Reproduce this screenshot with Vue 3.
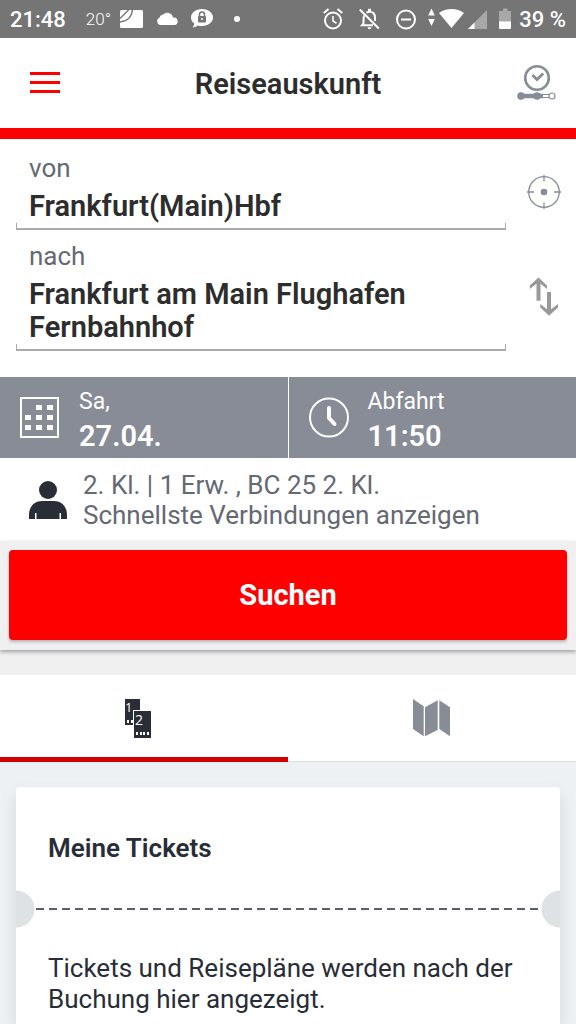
<script setup>
import { ref } from 'vue'

const from = ref('Frankfurt(Main)Hbf')
const to = ref('Frankfurt am Main Flughafen Fernbahnhof')
const tab = ref('tickets')

const calendarCells = [
  [16, 8], [27, 8],
  [5, 18], [16, 18], [27, 18],
  [5, 28], [16, 28], [27, 28],
]
</script>

<template>
  <div class="app">
    <div class="status">
      <div class="status-group">
        <span class="clock">21:48</span>
        <span class="temp">20°</span>
        <svg width="23" height="20" viewBox="0 0 23 20">
          <rect x="0" y="1" width="23" height="18" rx="1.500" fill="#fff" />
          <path d="M0 9.500 9.500 0M12.500 0C12 8 8.500 12 0 13" fill="none" stroke="#757575" stroke-width="1.300" />
        </svg>
        <svg width="22" height="20" viewBox="0 0 22 20">
          <path fill="#fff" d="M4 16a4 4 0 0 1-.5-7.500A4 4 0 0 1 7 5.500 6 6 0 0 1 17 8.500 3.800 3.800 0 0 1 18.500 16Z" />
        </svg>
        <svg width="22" height="20" viewBox="0 0 22 20">
          <path fill="#fff" d="M11 0C17.200 0 22 3.800 22 8.500S17.200 17 11 17c-1.500 0-3-.2-4.200-.6C5.500 17.500 4 18.200 1.500 18.200 2.800 17 3.300 16 3.200 14.500 1.200 13 0 11 0 8.500 0 3.800 4.800 0 11 0Z" />
          <rect x="7" y="7" width="8" height="6.500" rx="1" fill="#757575" />
          <path d="M8.500 7V5.500a2.500 2.500 0 0 1 5 0V7" fill="none" stroke="#757575" stroke-width="1.500" />
          <circle cx="11" cy="10" r="1" fill="#fff" />
        </svg>
        <span class="dot"></span>
      </div>
      <div class="status-group right">
        <div class="icons">
          <svg width="20" height="22" viewBox="0 0 20 22" fill="none" stroke="#fff" stroke-width="2">
            <circle cx="10" cy="12.500" r="8" />
            <path d="M.8 5 5.500 1M19.200 5 14.500 1" />
            <path d="M10 8v5l3.500 2.200" stroke-width="1.600" />
          </svg>
          <svg width="21" height="22" viewBox="0 0 21 22" fill="none" stroke="#fff" stroke-width="2">
            <path d="M.8 1.500 19.800 20.500" />
            <path d="M5 7.500C4.500 9 4.500 12 4.500 15.500L3 17.300H14M7.500 4.800C8.500 4 9.500 3.800 10.500 3.800c3.800 0 5.500 2.700 5.500 6.200v3" />
            <path d="M10.500 4V.8" stroke-width="3" />
            <path d="M8.500 19.300h4a2 2 0 0 1-4 0Z" fill="#fff" stroke="none" />
          </svg>
          <svg width="20" height="22" viewBox="0 0 20 22" fill="none" stroke="#fff" stroke-width="2">
            <circle cx="10" cy="11.500" r="9" />
            <path d="M5 11.500h10" />
          </svg>
        </div>
        <div class="signal">
          <svg width="36" height="22" viewBox="0 0 36 22" fill="#fff">
            <path d="M3.500.5 6.800 7.500H.2ZM.2 11h6.600L3.500 18ZM23.500 20 11 5C18 -.5 29-.5 36 5Z" />
          </svg>
          <svg width="19" height="22" viewBox="0 0 19 22">
            <path d="M19 2V21H0Z" fill="#a8a8a8" />
            <path d="M6.500 14.500V21H0Z" fill="#fff" />
          </svg>
        </div>
        <svg width="12" height="22" viewBox="0 0 12 22">
          <path d="M4 .5h4.500V3H12v11H0V3h4Z" fill="#a8a8a8" />
          <path d="M0 13.500h12V20a1 1 0 0 1-1 1H1a1 1 0 0 1-1-1Z" fill="#fff" />
        </svg>
        <span class="clock percent">39 %</span>
      </div>
    </div>

    <header class="header">
      <button class="plain" type="button" aria-label="Menü">
        <svg width="30" height="22" viewBox="0 0 30 22" fill="#f00">
          <rect y="0" width="30" height="3" /><rect y="9" width="30" height="3" /><rect y="18" width="30" height="3" />
        </svg>
      </button>
      <h1>Reiseauskunft</h1>
      <button class="plain" type="button" aria-label="Meine Reisen">
        <svg width="40" height="40" viewBox="0 0 40 40" fill="none" stroke="#878c96">
          <circle cx="21" cy="15" r="11.800" stroke-width="2.600" />
          <path d="m16.400 12 4.600 4.500 6.200-6" stroke-width="2.800" />
          <path d="M5 33h22" stroke-width="4.500" />
          <path d="M27 31.500h6M27 34.500h6" stroke-width="1" />
          <circle cx="5" cy="33" r="3.800" fill="#878c96" stroke="none" />
          <circle cx="21" cy="33" r="3.800" fill="#878c96" stroke="none" />
          <circle cx="36" cy="33" r="3" fill="#fff" stroke-width="1.200" />
        </svg>
      </button>
    </header>

    <form class="search" @submit.prevent>
      <div class="stations">
        <div class="field">
          <label for="from">von</label>
          <input id="from" v-model="from" type="text" />
          <div class="bracket"></div>
        </div>
        <button class="plain" type="button" aria-label="Standort verwenden">
          <svg width="34" height="34" viewBox="0 0 34 34" fill="none" stroke="#878c96" stroke-width="1.300">
            <circle cx="17" cy="17" r="15.300" />
            <path d="M17 0v6.500M17 27.500V34M0 17h7M27 17h7" />
            <circle cx="17" cy="17" r="3.300" fill="#878c96" stroke="none" />
          </svg>
        </button>
        <div class="field">
          <label for="to">nach</label>
          <textarea id="to" v-model="to" rows="2"></textarea>
          <div class="bracket"></div>
        </div>
        <button class="plain" type="button" aria-label="Start und Ziel tauschen">
          <svg width="32" height="42" viewBox="0 0 32 42" fill="#999">
            <path d="M10.500 2.500 19 10.500V14l-6.500-5.300V25.700h-4V8.700L1.800 14V10.500ZM21 40.700l-8.700-8.200V29L19 34.300V17h4V34.300L30 29v3.500Z" />
          </svg>
        </button>
      </div>

      <div class="when">
        <button type="button">
          <svg width="40" height="42" viewBox="0 0 40 42">
            <rect x="1" y="1" width="37" height="39" fill="none" stroke="#fff" stroke-width="2" />
            <rect v-for="[x, y] in calendarCells" :key="`${x}-${y}`" :x="x" :y="y" width="6" height="5" fill="#fff" />
          </svg>
          <span class="when-text"><span>Sa,</span><strong>27.04.</strong></span>
        </button>
        <button type="button">
          <svg width="40" height="42" viewBox="0 0 40 42" fill="none" stroke="#fff">
            <circle cx="20" cy="20.500" r="19" stroke-width="2" />
            <path d="M20 11v10l5.500 6" stroke-width="4" stroke-linecap="round" stroke-linejoin="round" />
          </svg>
          <span class="when-text"><span>Abfahrt</span><strong>11:50</strong></span>
        </button>
      </div>

      <button class="options" type="button">
        <svg width="38" height="38" viewBox="0 0 38 38" fill="#282d37">
          <circle cx="19" cy="9" r="9" />
          <path d="M0 38V34C0 25 6 20 13 20H25C32 20 38 25 38 34V38H32V32H30.500V38H7.500V32H6V38Z" />
        </svg>
        <span>2. Kl. | 1 Erw. , BC 25 2. Kl.<br />Schnellste Verbindungen anzeigen</span>
      </button>

      <div class="submit-row">
        <button class="submit" type="submit">Suchen</button>
      </div>
    </form>

    <div class="tabs" role="tablist">
      <button type="button" role="tab" aria-label="Meine Tickets" :aria-selected="tab === 'tickets'" @click="tab = 'tickets'">
        <svg class="tickets-icon" width="26" height="40" viewBox="0 0 26 40">
          <rect width="15" height="26" fill="#282d37" />
          <rect x="2" y="21" width="2" height="3" fill="#fff" /><rect x="6" y="21" width="2" height="3" fill="#fff" />
          <text x="0" y="13" font-family="Open Sans, sans-serif" font-size="13" fill="#fff">1</text>
          <rect x="8" y="11" width="19" height="29" fill="#fff" />
          <rect x="9" y="12" width="17" height="27" fill="#282d37" />
          <rect v-for="x in [11, 15, 18, 22]" :key="x" :x="x" y="33" width="2" height="3" fill="#fff" />
          <text x="10" y="26" font-family="Open Sans, sans-serif" font-size="14" fill="#fff">2</text>
        </svg>
      </button>
      <button type="button" role="tab" aria-label="Karte" :aria-selected="tab === 'map'" @click="tab = 'map'">
        <svg width="38" height="40" viewBox="0 0 38 40" fill="#878c96">
          <path d="m0 0 10.700 7.300v30L0 30ZM12 8.300 24.700 1.300V31L12 37.300ZM26.300 1.300 37 8.300v29L26.300 30Z" />
        </svg>
      </button>
    </div>

    <main class="content">
      <section class="card">
        <h2>Meine Tickets</h2>
        <div class="perforation"></div>
        <p>Tickets und Reisepläne werden nach der Buchung hier angezeigt.</p>
      </section>
    </main>
  </div>
</template>

<style>
body {
  background: #edf1f4;
}
</style>

<style scoped>
.app {
  display: flex;
  flex-direction: column;
  min-height: 100vh;
  font-family: Roboto, "Liberation Sans", sans-serif;
  color: #282d37;
}
.app * {
  box-sizing: border-box;
}
svg {
  display: block;
  flex: none;
}
button {
  font: inherit;
  color: inherit;
  border: 0;
  margin: 0;
  padding: 0;
  background: none;
  text-align: left;
  cursor: pointer;
}
.status {
  display: flex;
  justify-content: space-between;
  height: 38px;
  padding: 0 10px;
  background: #757575;
  color: #fff;
}
.status-group {
  display: flex;
  align-items: center;
  gap: 13px;
}
.status-group.right {
  gap: 12px;
}
.clock {
  font-size: 22px;
  font-weight: 500;
}
.percent {
  margin-left: -4px;
}
.temp {
  margin: 0 -4px 0 7px;
  font-size: 17px;
  font-weight: 300;
}
.dot {
  width: 6px;
  height: 6px;
  margin-left: 8px;
  border-radius: 50%;
  background: #fff;
}
.icons {
  display: flex;
  gap: 16px;
}
.signal {
  display: flex;
  gap: 4px;
}
.header {
  display: grid;
  grid-template-columns: 80px 1fr 80px;
  align-items: center;
  height: 101px;
  border-bottom: 11px solid #f00;
  background: #fff;
}
.header h1 {
  margin: 0;
  padding-top: 2px;
  text-align: center;
  font-size: 29px;
  line-height: 33px;
  font-weight: 600;
  color: #2d2d2d;
}
.plain {
  display: flex;
  justify-content: center;
  align-items: center;
}
.header .plain:first-child {
  padding-left: 10px;
}
.search {
  position: relative;
  background: #fff;
}
.stations {
  display: grid;
  grid-template-columns: 1fr 64px;
  gap: 11px 6px;
  padding: 14px 0 26px 16px;
}
.field {
  display: flex;
  flex-direction: column;
}
.field label {
  margin-bottom: 7px;
  padding-left: 13px;
  font-size: 26px;
  line-height: 30px;
  color: #646973;
}
.field input,
.field textarea {
  display: block;
  width: 100%;
  height: 33px;
  margin: 0;
  padding: 0 13px;
  border: 0;
  outline: 0;
  background: none;
  resize: none;
  overflow: hidden;
  font: 600 29px/33px Roboto, "Liberation Sans", sans-serif;
  color: #2d2d2d;
}
.field textarea {
  height: 66px;
}
.bracket {
  height: 7px;
  border: solid #aaa;
  border-width: 0 1px 2px;
}
.when {
  display: grid;
  grid-template-columns: 1fr 1fr;
  gap: 1px;
}
.when button {
  display: flex;
  align-items: center;
  gap: 19px;
  height: 81px;
  padding-left: 20px;
  background: #878c96;
  color: #fff;
}
.when-text {
  display: flex;
  flex-direction: column;
  gap: 4px;
  padding-top: 2px;
  font-size: 23px;
  line-height: 30px;
}
.when-text strong {
  font-size: 29px;
  font-weight: 600;
}
.options {
  display: flex;
  align-items: center;
  gap: 16px;
  width: 100%;
  height: 83px;
  padding-left: 29px;
  font-size: 26px;
  line-height: 30px;
  color: #646973;
}
.submit-row {
  height: 109px;
  padding: 9px 9px 10px;
  background: #f0f0f0;
  box-shadow: 0 2px 4px rgba(40, 45, 55, 0.4);
}
.submit {
  display: block;
  width: 100%;
  height: 90px;
  border-radius: 4px;
  background: #f00;
  box-shadow: 0 2px 3px rgba(0, 0, 0, 0.25);
  text-align: center;
  font-size: 29px;
  font-weight: 700;
  color: #fff;
}
.tabs {
  display: grid;
  grid-template-columns: 1fr 1fr;
  height: 112px;
  border-top: 25px solid #f0f0f0;
  background: #fff;
}
.tabs button {
  display: flex;
  justify-content: center;
  align-items: center;
  padding-top: 2px;
  border-bottom: 1px solid #dcdfe1;
}
.tabs button[aria-selected="true"] {
  padding-top: 6px;
  border-bottom: 5px solid #d20000;
}
.tickets-icon {
  margin-right: 12px;
}
.content {
  display: flex;
  flex: 1;
  padding: 25px 16px 0;
}
.card {
  flex: 1;
  padding: 46px 32px 8px;
  border-radius: 3px 3px 0 0;
  background: #fff;
  box-shadow: 0 8px 16px rgba(40, 45, 55, 0.12);
}
.card h2 {
  margin: 0;
  font-size: 26px;
  line-height: 31px;
  font-weight: 600;
}
.perforation {
  display: flex;
  align-items: center;
  height: 38px;
  margin: 26px -32px 25px;
  padding: 0 20px;
  background:
    radial-gradient(circle at 0 50%, #dfe2e5 18px, transparent 19px),
    radial-gradient(circle at 100% 50%, #dfe2e5 18px, transparent 19px);
}
.perforation::before {
  content: "";
  flex: 1;
  height: 2px;
  background: linear-gradient(90deg, #5a5f6b 8px, transparent 8px) 0 0 / 13px 2px repeat-x;
}
.card p {
  margin: 0;
  font-size: 26px;
  line-height: 31px;
}
</style>
